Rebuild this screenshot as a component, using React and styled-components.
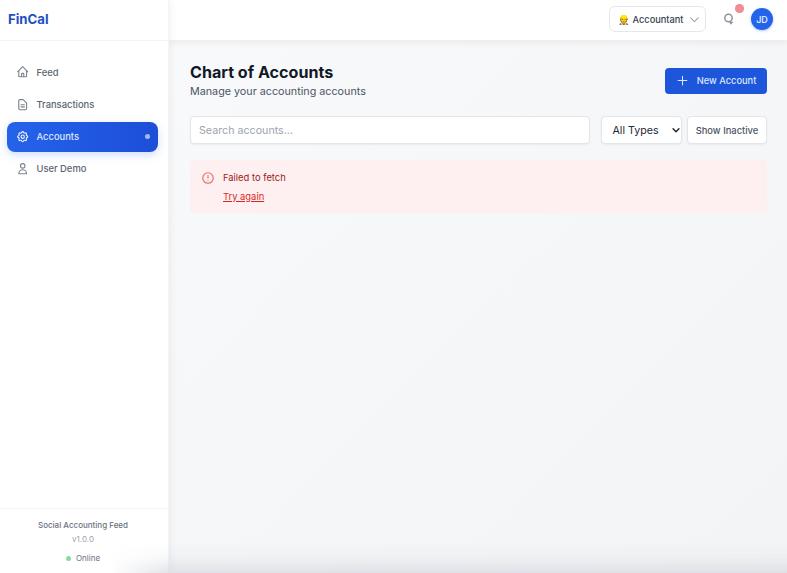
import React from "react";
import styled, { createGlobalStyle } from "styled-components";
import {
  HiOutlineHome, HiOutlineDocumentText, HiOutlineCog, HiOutlineUser,
  HiOutlineChevronDown, HiOutlinePlus, HiOutlineExclamationCircle,
} from "react-icons/hi";

const Global = createGlobalStyle`
  * { box-sizing: border-box; }
  html, body { margin: 0; padding: 0; height: 100%; overflow: hidden; }
  body { font-family: Inter, "Liberation Sans", sans-serif; background: #f8f9fb; }
`;
const Shell = styled.div`
  display: flex; width: 787px; height: 573px; overflow: hidden; position: relative;
  background: linear-gradient(135deg, #f9fafb 0%, #f3f4f6 100%);
`;
const Sidebar = styled.aside`
  width: 169px; flex: none; display: flex; flex-direction: column; background: #fff;
  border-right: 1px solid #f3f4f6; box-shadow: 2px 0 8px rgba(15,23,42,.05); position: relative; z-index: 2;
`;
const Brand = styled.div`
  height: 41px; flex: none; display: flex; align-items: center; padding: 0 8px 3px;
  border-bottom: 1px solid #f3f4f6; color: #1e4fc4; font-size: 13.2px; font-weight: 700;
`;
const Nav = styled.nav`
  flex: 1; display: flex; flex-direction: column; gap: 2.3px; padding: 16px 10px 15px 7px;
`;
const NavItem = styled.a`
  height: 30px; display: flex; align-items: center; gap: 7.6px; padding: 0 8.5px; border-radius: 8px;
  font-size: 9.4px; font-weight: 500; color: ${p => p.$active ? "#dfe8ff" : "#5b6472"};
  background: ${p => p.$active ? "linear-gradient(90deg, #2563eb, #1d4ed8)" : "transparent"};
  box-shadow: ${p => p.$active ? "0 3px 8px rgba(37,99,235,.22)" : "none"};
  svg { color: ${p => p.$active ? "#eef2ff" : "#7b8390"}; flex: none; }
`;
const Dot = styled.span`
  width: 5px; height: 5px; border-radius: 50%; background: #a5b9f5; margin-left: auto;
`;
const Foot = styled.div`
  height: 65px; flex: none; border-top: 1px solid #f3f4f6; display: flex; flex-direction: column;
  align-items: center; padding: 10px 2px 0 0;
`;
const FootTitle = styled.div`font-size: 8px; line-height: 12px; color: #6b7280; font-weight: 500;`;
const FootVersion = styled.div`font-size: 8px; line-height: 12px; color: #9ca3af; margin-top: 2px;`;
const Online = styled.div`
  display: flex; align-items: center; gap: 5px; font-size: 8px; color: #6b7280; margin-top: 7px; line-height: 12px;
  &::before { content: ""; width: 5px; height: 5px; border-radius: 50%; background: #86dba4; }
`;
const Column = styled.div`flex: 1; min-width: 0; display: flex; flex-direction: column;`;
const Header = styled.header`
  height: 40px; flex: none; background: #fff; box-shadow: 0 2px 7px rgba(15,23,42,.07);
  display: flex; align-items: center; justify-content: flex-end; padding: 0 14px 2px 0;
`;
const Role = styled.div`
  width: 97px; height: 26px; border: 1px solid #e5e7eb; border-radius: 6px; background: #fff; white-space: nowrap;
  display: flex; align-items: center; padding: 0 4px 0 8px; font-size: 9.25px; font-weight: 500; color: #374151; gap: 4px;
  svg { margin-left: auto; color: #9ca3af; }
`;
const BellBtn = styled.div`
  position: relative; width: 14px; height: 14px; margin-left: 16px; margin-right: 15px; color: #8f949d; display: flex;
`;
const Badge = styled.span`
  position: absolute; top: -8px; right: -7.5px; width: 8.5px; height: 8.5px; border-radius: 50%; background: #f08d94;
`;
const Avatar = styled.div`
  width: 22px; height: 22px; border-radius: 50%; background: #2563eb; color: #dbe6ff; font-size: 9px; font-weight: 600;
  display: flex; align-items: center; justify-content: center; box-shadow: 0 1px 3px rgba(37,99,235,.35);
`;
const Main = styled.main`padding: 23px 20px 0 21px; flex: 1;`;
const TitleRow = styled.div`display: flex; justify-content: space-between; align-items: flex-start;`;
const Title = styled.h1`margin: 0; font-size: 16.1px; line-height: 19px; font-weight: 700; color: #111827;`;
const Sub = styled.p`margin: 2px 0 0; font-size: 10.75px; line-height: 16px; color: #4b5563;`;
const Primary = styled.button`
  width: 102px; height: 26px; margin-top: 4.5px; border: 0; border-radius: 4px; background: #1d56db; color: #dbe6ff;
  font: 500 9.3px Inter, sans-serif; display: flex; align-items: center; justify-content: center; gap: 8px;
`;
const Filters = styled.div`display: flex; gap: 5px; margin-top: 16px; height: 28px;`;
const Search = styled.input`
  flex: 1; margin-right: 6px; min-width: 0; height: 28px; border: 1px solid #e2e5ea; border-radius: 4px; background: #fff;
  padding: 0 8px; font: 400 10.7px Inter, sans-serif; color: #111827; box-shadow: 0 1px 2px rgba(15,23,42,.05);
  &::placeholder { color: #9ca3af; }
`;
const TypeSelect = styled.div`
  width: 81px; height: 28px; border: 1px solid #e2e5ea; border-radius: 4px; background: #fff; display: flex; align-items: center;
  padding: 0 0 0 10.5px; font-size: 10.7px; color: #1f2937; box-shadow: 0 1px 2px rgba(15,23,42,.05);
  svg { margin-left: auto; margin-right: 0.5px; color: #1f2937; }
`;
const Inactive = styled.button`
  width: 80px; height: 28px; border: 1px solid #e2e5ea; border-radius: 4px; background: #fff; color: #4b5563;
  font: 500 9.4px Inter, sans-serif; padding: 0; box-shadow: 0 1px 2px rgba(15,23,42,.05);
`;
const Alert = styled.div`
  margin-top: 16px; height: 53px; background: #fef0f0; border-radius: 4px; display: flex; padding: 11px 11px; gap: 8px;
  svg { color: #ea6a6a; flex: none; }
`;
const AlertBody = styled.div`display: flex; flex-direction: column; gap: 6px;`;
const AlertText = styled.div`font-size: 9.4px; line-height: 13px; color: #991b1b;`;
const Retry = styled.a`font-size: 9.4px; line-height: 13px; color: #dc2626; text-decoration: underline;`;
const BottomShade = styled.div`
  position: absolute; left: 110px; right: 0; bottom: 0; height: 30px; z-index: 3; pointer-events: none;
  background: linear-gradient(180deg, rgba(226,232,240,0), rgba(214,217,224,.18) 50%, rgba(208,212,220,.6));
  -webkit-mask-image: linear-gradient(90deg, transparent, #000 55px);
`;

const Bell = () => (
  <svg width="14" height="14" viewBox="0 0 14 14" fill="none" stroke="currentColor" strokeWidth="1.5">
    <circle cx="6.5" cy="6" r="3.7" />
    <path d="M6.8 9.8 L11.5 9.8 L9 12.8 Z" fill="currentColor" stroke="none" />
  </svg>
);

export default function App() {
  return (
    <Shell>
      <Global />
      <Sidebar>
        <Brand>FinCal</Brand>
        <Nav>
          <NavItem><HiOutlineHome size={13.4} />Feed</NavItem>
          <NavItem><HiOutlineDocumentText size={13.4} />Transactions</NavItem>
          <NavItem $active><HiOutlineCog size={13.4} />Accounts<Dot /></NavItem>
          <NavItem><HiOutlineUser size={13.4} />User Demo</NavItem>
        </Nav>
        <Foot>
          <FootTitle>Social Accounting Feed</FootTitle>
          <FootVersion>v1.0.0</FootVersion>
          <Online>Online</Online>
        </Foot>
      </Sidebar>
      <Column>
        <Header>
          <Role>👷 Accountant<HiOutlineChevronDown size={13} /></Role>
          <BellBtn><Bell /><Badge /></BellBtn>
          <Avatar>JD</Avatar>
        </Header>
        <Main>
          <TitleRow>
            <div>
              <Title>Chart of Accounts</Title>
              <Sub>Manage your accounting accounts</Sub>
            </div>
            <Primary><HiOutlinePlus size={13} />New Account</Primary>
          </TitleRow>
          <Filters>
            <Search placeholder="Search accounts..." />
            <TypeSelect>All Types<HiOutlineChevronDown size={10} strokeWidth={3.5} /></TypeSelect>
            <Inactive>Show Inactive</Inactive>
          </Filters>
          <Alert>
            <HiOutlineExclamationCircle size={14} />
            <AlertBody>
              <AlertText>Failed to fetch</AlertText>
              <Retry>Try again</Retry>
            </AlertBody>
          </Alert>
        </Main>
      </Column>
      <BottomShade />
    </Shell>
  );
}
